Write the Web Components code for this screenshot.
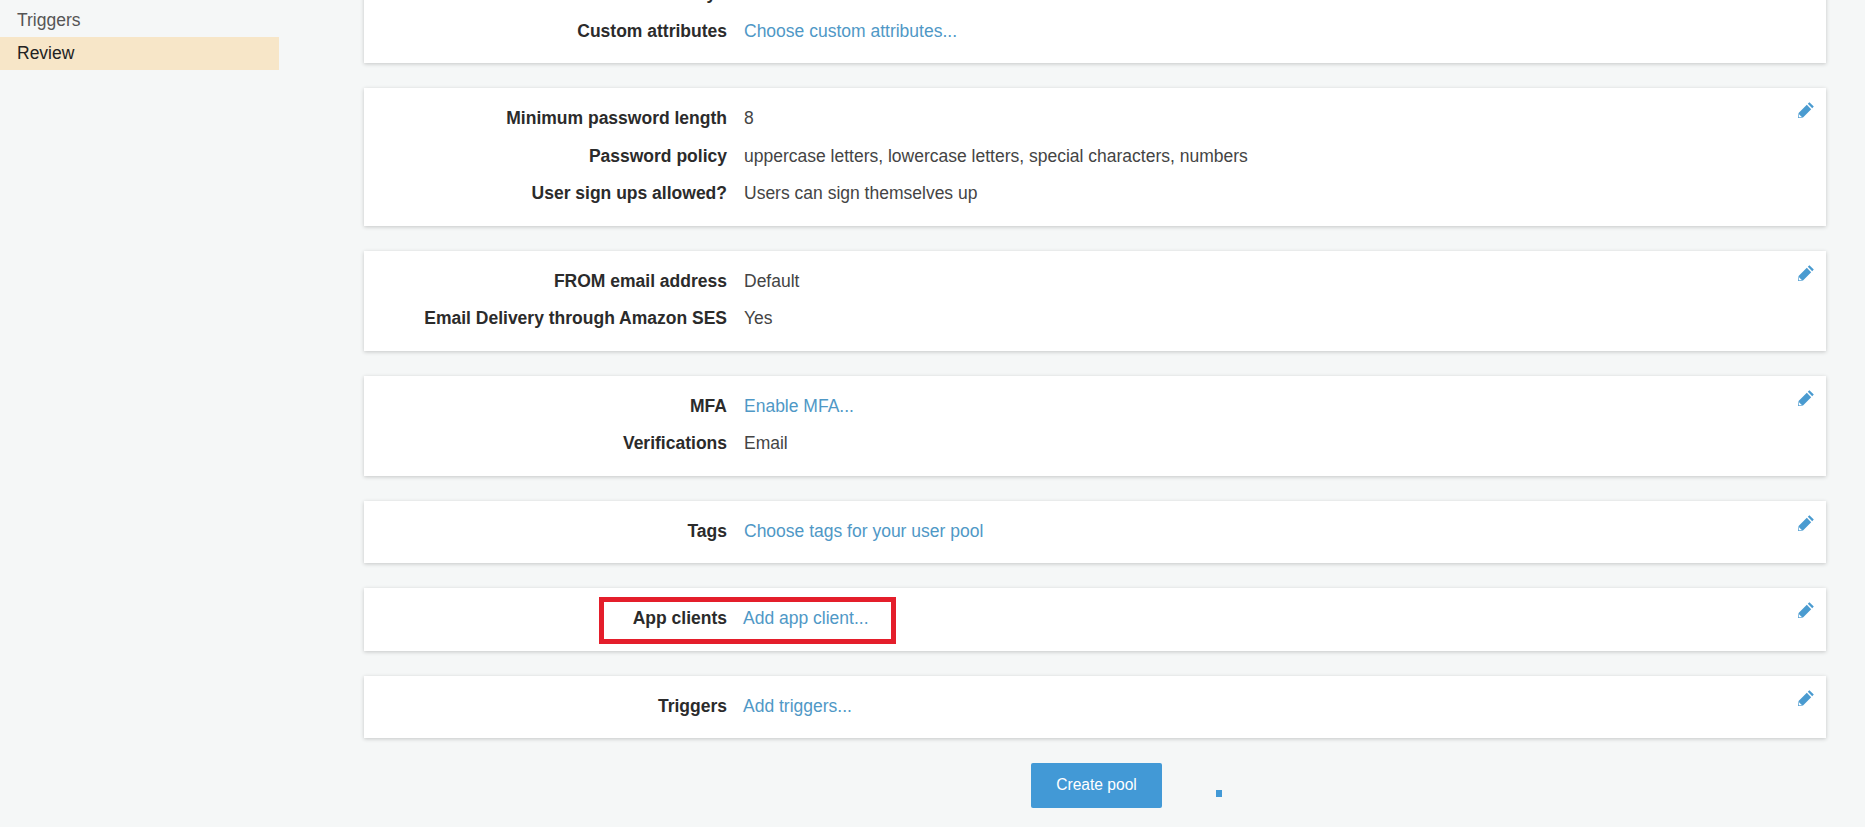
<!DOCTYPE html>
<html>
<head>
<meta charset="utf-8">
<title>Review</title>
<style>
  html, body { margin: 0; height: 100%; overflow: hidden; background: #f5f7f7; }
  body { font-family: 'Liberation Sans', Arial, sans-serif; }
</style>
</head>
<body>
<pool-page>
  <side-nav slot="nav">
    <nav-item>Triggers</nav-item>
    <nav-item active>Review</nav-item>
  </side-nav>
  <review-card>
    <review-row label="Enable case insensitivity?">Yes</review-row>
    <review-row label="Custom attributes"><a-link>Choose custom attributes...</a-link></review-row>
  </review-card>
  <review-card>
    <review-row label="Minimum password length">8</review-row>
    <review-row label="Password policy">uppercase letters, lowercase letters, special characters, numbers</review-row>
    <review-row label="User sign ups allowed?">Users can sign themselves up</review-row>
  </review-card>
  <review-card>
    <review-row label="FROM email address">Default</review-row>
    <review-row label="Email Delivery through Amazon SES">Yes</review-row>
  </review-card>
  <review-card>
    <review-row label="MFA"><a-link>Enable MFA...</a-link></review-row>
    <review-row label="Verifications">Email</review-row>
  </review-card>
  <review-card>
    <review-row label="Tags"><a-link>Choose tags for your user pool</a-link></review-row>
  </review-card>
  <review-card>
    <review-row label="App clients" tight><a-link>Add app client...</a-link></review-row>
    <mark-box></mark-box>
  </review-card>
  <review-card>
    <review-row label="Triggers" tight><a-link>Add triggers...</a-link></review-row>
  </review-card>
  <pool-actions></pool-actions>
</pool-page>

<script>
class PoolPage extends HTMLElement {
    constructor () {
        super();
        this.attachShadow({ mode: 'open' });
        this.shadowRoot.innerHTML = `
  <style>
  :host {
    display: grid;
    grid-template-columns: 364px 1462px;
    align-items: start;
    height: 827px;
    overflow: hidden;
    color: #444;
    font-size: 17.5px;
  }
  .main {
    display: flex;
    flex-direction: column;
    gap: 25px;
    margin-top: -37px;
  }
  </style>
  <slot name="nav"></slot>
  <div class="main"><slot></slot></div>
`;
    }
}

class SideNav extends HTMLElement {
    constructor () {
        super();
        this.attachShadow({ mode: 'open' });
        this.shadowRoot.innerHTML = `
  <style>
  :host {
    display: flex;
    flex-direction: column;
    width: 279px;
    padding-top: 4px;
  }
  </style>
  <slot></slot>
`;
    }
}

class NavItem extends HTMLElement {
    constructor () {
        super();
        this.attachShadow({ mode: 'open' });
        this.shadowRoot.innerHTML = `
  <style>
  :host {
    display: block;
    height: 33px;
    line-height: 32px;
    padding-left: 17px;
    color: #555;
  }
  :host([active]) {
    background: #f7e6c8;
    color: #222;
  }
  </style>
  <slot></slot>
`;
    }
}

class ReviewCard extends HTMLElement {
    constructor () {
        super();
        this.attachShadow({ mode: 'open' });
        this.shadowRoot.innerHTML = `
  <style>
  :host {
    display: block;
    position: relative;
    background: #fff;
    box-shadow: 0 1px 4px rgba(0, 0, 0, 0.2);
    padding: 12px 0 13px;
  }
  svg {
    position: absolute;
    top: 14px;
    right: 12px;
    width: 16px;
    height: 16px;
  }
  </style>
  <slot></slot>
  <svg viewBox="0 0 16 16"><path fill="#4a9bd0" d="M11.4 0.2 15.8 4.6 14.2 6.2 9.8 1.8zM8.8 2.8l4.4 4.4-8.2 8.2-5 0.6 0.6-5z"/><path fill="#fff" d="M1 12.2l2.8 2.8-3 0.3z"/></svg>
`;
    }
}

class ReviewRow extends HTMLElement {
    constructor () {
        super();
        this.attachShadow({ mode: 'open' });
        this.shadowRoot.innerHTML = `
  <style>
  :host {
    display: grid;
    grid-template-columns: 363px 1fr;
    column-gap: 17px;
    height: 37.5px;
    line-height: 37.5px;
  }
  :host([tight]) { column-gap: 16px; }
  b { text-align: right; color: #2b2b2b; white-space: nowrap; }
  </style>
  <b></b><div><slot></slot></div>
`;
        this.shadowRoot.querySelector('b').textContent = this.getAttribute('label');
    }
}

class ALink extends HTMLElement {
    constructor () {
        super();
        this.attachShadow({ mode: 'open' });
        this.shadowRoot.innerHTML = `
  <style>
  :host { color: #4f98c6; }
  </style>
  <slot></slot>
`;
    }
}

class MarkBox extends HTMLElement {
    constructor () {
        super();
        this.attachShadow({ mode: 'open' });
        this.shadowRoot.innerHTML = `
  <style>
  :host {
    position: absolute;
    left: 235px;
    top: 9px;
    width: 297px;
    height: 47px;
    box-sizing: border-box;
    border: 5px solid #e41e2b;
  }
  </style>
`;
    }
}

class PoolActions extends HTMLElement {
    constructor () {
        super();
        this.attachShadow({ mode: 'open' });
        this.shadowRoot.innerHTML = `
  <style>
  :host {
    display: flex;
    align-items: flex-start;
    padding-left: 667px;
    gap: 54px;
  }
  button {
    width: 131px;
    height: 45px;
    border: 0;
    border-radius: 2px;
    background: #4299d6;
    color: #fff;
    font: 15.6px 'Liberation Sans', Arial, sans-serif;
    padding: 0 0 2px;
    cursor: pointer;
  }
  i {
    display: block;
    width: 6px;
    height: 7px;
    margin-top: 27px;
    background: #4299d6;
  }
  </style>
  <button>Create pool</button><i></i>
`;
    }
}

customElements.define('pool-page', PoolPage);
customElements.define('side-nav', SideNav);
customElements.define('nav-item', NavItem);
customElements.define('review-card', ReviewCard);
customElements.define('review-row', ReviewRow);
customElements.define('a-link', ALink);
customElements.define('mark-box', MarkBox);
customElements.define('pool-actions', PoolActions);
</script>
</body>
</html>
